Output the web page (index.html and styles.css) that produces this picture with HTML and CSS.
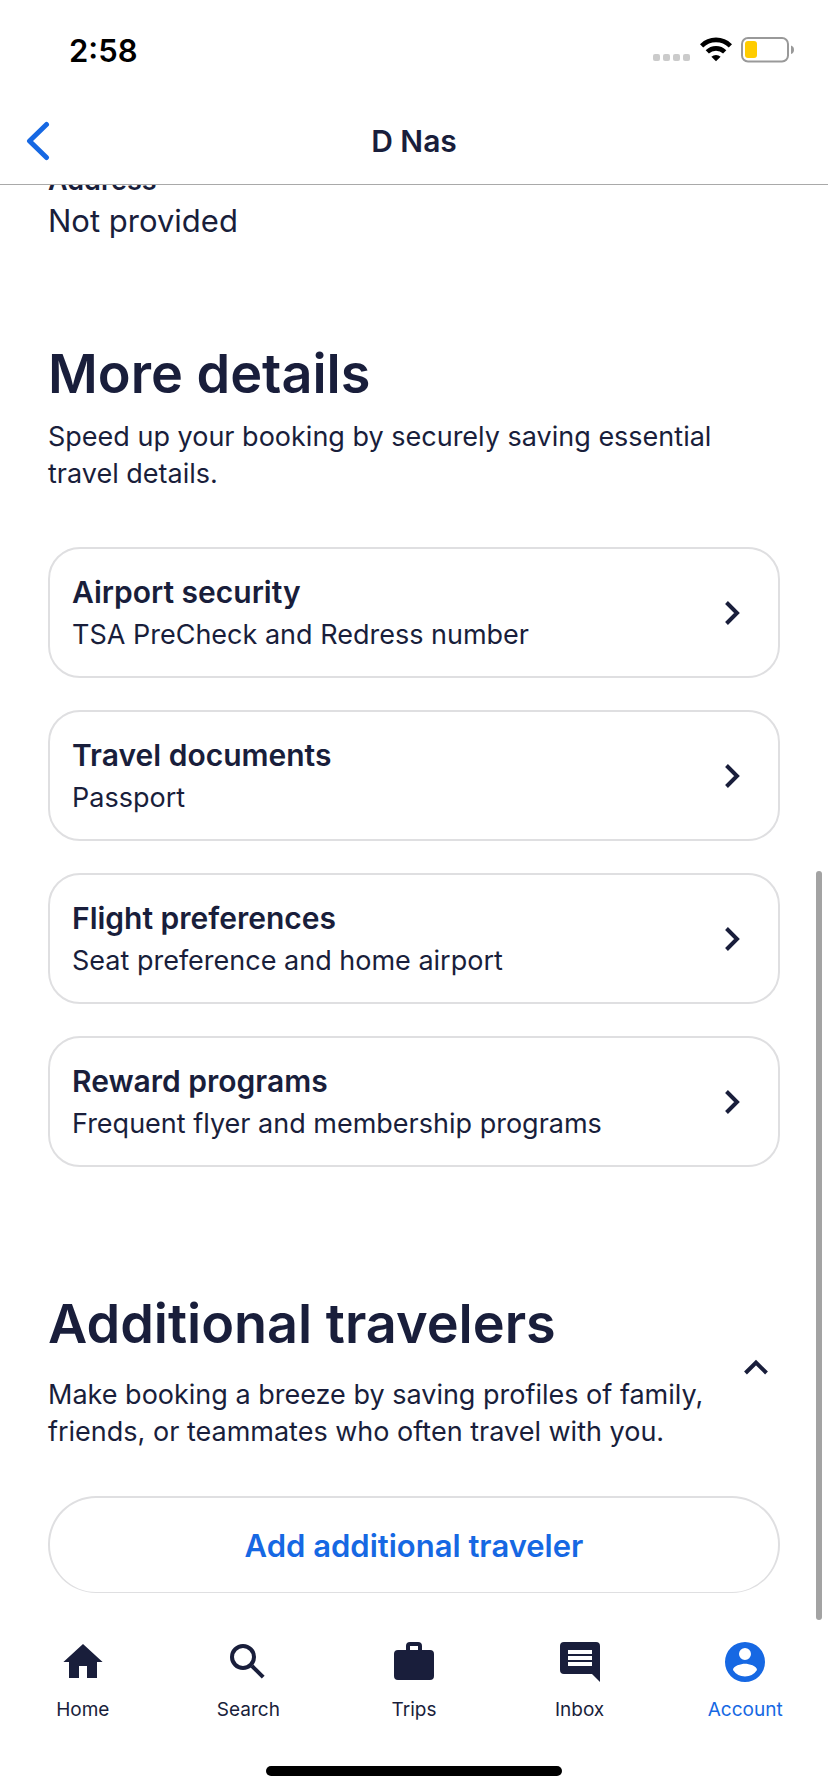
FILE: index.html
```html
<!DOCTYPE html>
<html lang="en">
<head>
    <meta charset="UTF-8">
    <meta name="viewport" content="width=device-width, initial-scale=1.0">
    <title>D Nas</title>
    <link rel="stylesheet" href="styles.css">
</head>
<body>

    <!-- Status bar -->
    <div class="status-bar">
        <span class="time">2:58</span>
        <div class="status-icons">
            <svg width="38" height="26" viewBox="0 0 38 26" fill="#cbcbcb">
                <rect x="0" y="17" width="7" height="7" rx="2"/>
                <rect x="10" y="17" width="7" height="7" rx="2"/>
                <rect x="20" y="17" width="7" height="7" rx="2"/>
                <rect x="30" y="17" width="7" height="7" rx="2"/>
            </svg>
            <svg width="32" height="26" viewBox="0 0 32 26">
                <g fill="none" stroke="#000" stroke-width="4.6">
                    <path d="M1.6 8.8a20.5 20.5 0 0 1 28.8 0"/>
                    <path d="M7.3 14.9a12.4 12.4 0 0 1 17.4 0"/>
                </g>
                <path d="M16 24.2l-4.6-4.4a6.6 6.6 0 0 1 9.2 0z" fill="#000"/>
            </svg>
            <svg width="54" height="26" viewBox="0 0 54 26">
                <rect x="1" y="1" width="46" height="23.5" rx="6" fill="none" stroke="#999" stroke-width="2"/>
                <rect x="4" y="4" width="12" height="17" rx="3" fill="#ffcc00"/>
                <path d="M50 8.5q3 1 3 4.3t-3 4.3z" fill="#999"/>
            </svg>
        </div>
    </div>

    <!-- Page header -->
    <header class="header">
        <button type="button" class="back-button" aria-label="Back">
            <svg width="28" height="40" viewBox="0 0 28 40">
                <path d="M22.500 3.500L5.500 20l17 16.500" fill="none" stroke="#1668e3" stroke-width="5" stroke-linecap="round" stroke-linejoin="round"/>
            </svg>
        </button>
        <h1>D Nas</h1>
    </header>

    <main class="content">
        <div class="field">
            <p class="field-label">Address</p>
            <p class="field-value">Not provided</p>
        </div>

        <section class="details">
            <h2>More details</h2>
            <p class="description">Speed up your booking by securely saving essential travel details.</p>

            <div class="card-list">
                <button type="button" class="card">
                    <span class="card-text">
                        <span class="card-title">Airport security</span>
                        <span class="card-subtitle">TSA PreCheck and Redress number</span>
                    </span>
                    <svg class="chevron" viewBox="0 0 24 24"><path d="M6.500 1.500L17 12 6.500 22.500"/></svg>
                </button>
                <button type="button" class="card">
                    <span class="card-text">
                        <span class="card-title">Travel documents</span>
                        <span class="card-subtitle">Passport</span>
                    </span>
                    <svg class="chevron" viewBox="0 0 24 24"><path d="M6.500 1.500L17 12 6.500 22.500"/></svg>
                </button>
                <button type="button" class="card">
                    <span class="card-text">
                        <span class="card-title">Flight preferences</span>
                        <span class="card-subtitle">Seat preference and home airport</span>
                    </span>
                    <svg class="chevron" viewBox="0 0 24 24"><path d="M6.500 1.500L17 12 6.500 22.500"/></svg>
                </button>
                <button type="button" class="card">
                    <span class="card-text">
                        <span class="card-title">Reward programs</span>
                        <span class="card-subtitle">Frequent flyer and membership programs</span>
                    </span>
                    <svg class="chevron" viewBox="0 0 24 24"><path d="M6.500 1.500L17 12 6.500 22.500"/></svg>
                </button>
            </div>
        </section>

        <section class="travelers">
            <div class="travelers-header">
                <div class="travelers-text">
                    <h2>Additional travelers</h2>
                    <p class="description">Make booking a breeze by saving profiles of family, friends, or teammates who often travel with you.</p>
                </div>
                <button type="button" class="collapse-button" aria-label="Collapse">
                    <svg class="chevron" viewBox="0 0 24 24"><path d="M1.500 17L12 6.500 22.500 17"/></svg>
                </button>
            </div>
            <button type="button" class="add-button">Add additional traveler</button>
        </section>
    </main>

    <!-- Bottom tabs -->
    <nav class="tab-bar">
        <a href="#" class="tab">
            <svg viewBox="0 0 24 24"><path d="M10 20v-6h4v6h5v-8h2.800L12 3 2.200 12H5v8z"/></svg>
            <span>Home</span>
        </a>
        <a href="#" class="tab">
            <svg viewBox="0 0 24 24" fill="none" stroke="currentColor" stroke-width="2"><circle cx="9.500" cy="9.500" r="5.500"/><path d="M14 14l5.600 5.600"/></svg>
            <span>Search</span>
        </a>
        <a href="#" class="tab">
            <svg viewBox="0 0 24 24"><path d="M20 6h-4V4a2 2 0 0 0-2-2h-4a2 2 0 0 0-2 2v2H4a2 2 0 0 0-2 2v11a2 2 0 0 0 2 2h16a2 2 0 0 0 2-2V8a2 2 0 0 0-2-2zm-6 0h-4V4h4z"/></svg>
            <span>Trips</span>
        </a>
        <a href="#" class="tab">
            <svg viewBox="0 0 24 24"><path d="M22 4a2 2 0 0 0-2-2H4a2 2 0 0 0-2 2v12a2 2 0 0 0 2 2h14l4 4zm-4 10H6v-2h12zm0-3H6V9h12zm0-3H6V6h12z"/></svg>
            <span>Inbox</span>
        </a>
        <a href="#" class="tab active">
            <svg viewBox="0 0 24 24"><path fill-rule="evenodd" d="M12 2a10 10 0 1 0 0 20 10 10 0 0 0 0-20zm0 3a3 3 0 1 1 0 6 3 3 0 0 1 0-6zm0 14.200a7.200 7.200 0 0 1-6-3.220c.03-1.990 4-3.080 6-3.080s5.970 1.090 6 3.080a7.200 7.200 0 0 1-6 3.220z"/></svg>
            <span>Account</span>
        </a>
    </nav>

    <div class="home-indicator"></div>
    <div class="scroll-thumb"></div>

</body>
</html>
```

FILE: styles.css
```css
/* General page styling */
* {
    box-sizing: border-box;
}

body {
    position: relative;
    display: flex;
    flex-direction: column;
    height: 100vh;
    margin: 0;
    overflow: hidden;
    background-color: #fff;
    color: #191e3b;
    font-family: Inter, "Liberation Sans", sans-serif;
    font-size: 27px;
}

h1, h2, p {
    margin: 0;
}

button {
    padding: 0;
    border: none;
    background: none;
    color: inherit;
    font-family: inherit;
    cursor: pointer;
}

svg {
    display: block;
    flex-shrink: 0;
}

/* Status bar */
.status-bar {
    display: flex;
    flex-shrink: 0;
    justify-content: space-between;
    align-items: center;
    height: 100px;
    padding: 0 33px 0 69px;
    color: #000;
}

.time {
    font-size: 31px;
    font-weight: 600;
}

.status-icons {
    display: flex;
    gap: 9px;
}

/* Header */
.header {
    display: grid;
    grid-template-columns: 80px 1fr 80px;
    align-items: center;
    flex-shrink: 0;
    height: 85px;
    padding-bottom: 3px;
    border-bottom: 1px solid #a9a9a9;
}

.back-button {
    justify-self: start;
    padding-left: 24px;
}

.header h1 {
    font-size: 30px;
    font-weight: 600;
    text-align: center;
}

/* Scrolled content */
.content {
    flex: 1;
    min-height: 0;
    padding: 0 48px;
    overflow: hidden;
}

.field {
    margin-top: -24px;
    line-height: 40px;
}

.field-label {
    font-size: 27px;
    font-weight: 600;
}

.field-value {
    font-size: 31px;
}

h2 {
    font-size: 54px;
    font-weight: 600;
    line-height: 64px;
}

.description {
    max-width: 670px;
    line-height: 37px;
}

.details {
    margin-top: 101px;
}

.details .description {
    margin-top: 12px;
}

/* Cards */
.card-list {
    display: flex;
    flex-direction: column;
    gap: 32px;
    margin-top: 55px;
}

.card {
    display: flex;
    justify-content: space-between;
    align-items: center;
    padding: 22px 34px 21px 22px;
    border: 2px solid #dfdfe1;
    border-radius: 32px;
    line-height: 42px;
    text-align: left;
}

.card-text {
    display: flex;
    flex-direction: column;
}

.card-title {
    font-size: 30px;
    font-weight: 600;
}

.card-subtitle {
    padding-top: 1px;
    margin-bottom: -1px;
    font-size: 27px;
}

.chevron {
    width: 24px;
    height: 24px;
    fill: none;
    stroke: currentColor;
    stroke-width: 4;
}

/* Additional travelers */
.travelers {
    margin-top: 125px;
}

.travelers-header {
    display: flex;
    justify-content: space-between;
    align-items: center;
}

.travelers .description {
    margin-top: 20px;
}

.collapse-button {
    padding: 0 12px 6px 0;
}

.add-button {
    width: 100%;
    height: 97px;
    margin-top: 46px;
    border: 2px solid #dfdfe1;
    border-bottom-width: 1px;
    border-radius: 48px;
    color: #1668e3;
    font-size: 31px;
    font-weight: 600;
}

/* Bottom tabs */
.tab-bar {
    display: flex;
    flex-shrink: 0;
    height: 172px;
    padding-top: 44px;
}

.tab {
    display: flex;
    flex: 1;
    flex-direction: column;
    align-items: center;
    gap: 10px;
    color: #191e3b;
    font-size: 19px;
    line-height: 28px;
    text-decoration: none;
}

.tab svg {
    width: 48px;
    height: 48px;
    fill: currentColor;
}

.tab svg[fill="none"] {
    fill: none;
}

.tab.active {
    color: #1668e3;
}

.home-indicator {
    flex-shrink: 0;
    width: 296px;
    height: 10px;
    margin: 0 auto 16px;
    border-radius: 5px;
    background-color: #000;
}

/* Scroll position indicator */
.scroll-thumb {
    position: absolute;
    top: 871px;
    right: 6px;
    width: 6px;
    height: 749px;
    border-radius: 3px;
    background-color: #a3a3a3;
}
```
